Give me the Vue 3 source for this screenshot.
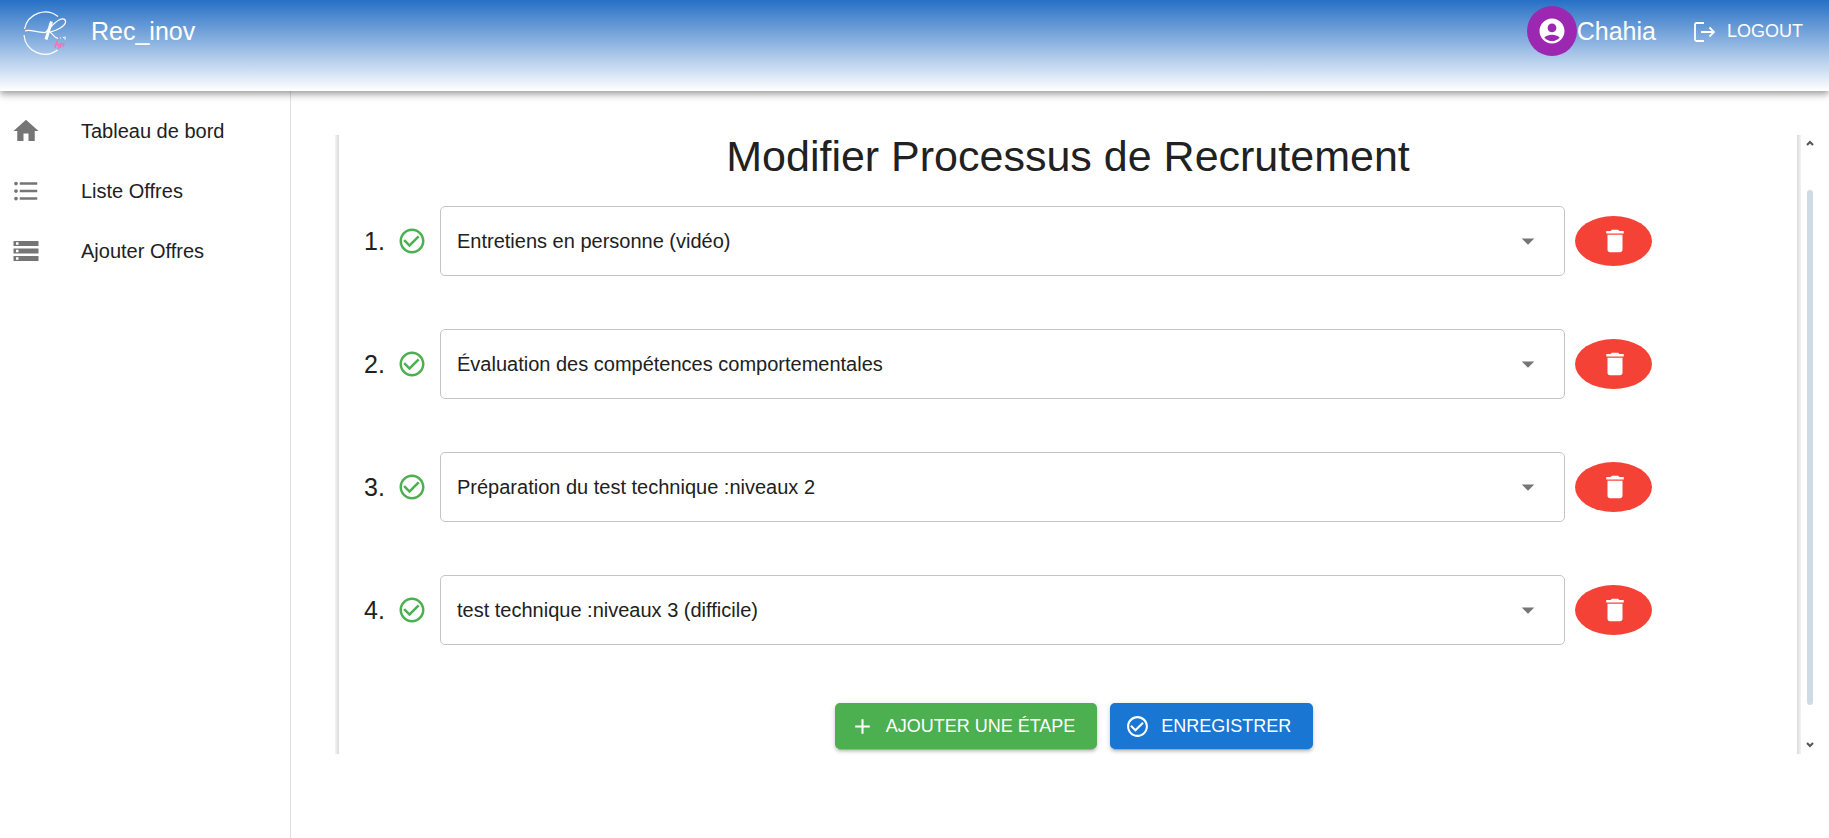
<script setup>
import { ref } from 'vue'

const steps = ref([
  'Entretiens en personne (vidéo)',
  'Évaluation des compétences comportementales',
  'Préparation du test technique :niveaux 2',
  'test technique :niveaux 3 (difficile)',
])
const options = [...steps.value]

const nav = [
  { label: 'Tableau de bord', icon: 'M10 20v-6h4v6h5v-8h3L12 3 2 12h3v8z' },
  {
    label: 'Liste Offres',
    icon: 'M4 10.5c-.83 0-1.5.67-1.5 1.5s.67 1.5 1.5 1.5 1.5-.67 1.5-1.5-.67-1.5-1.5-1.5m0-6c-.83 0-1.5.67-1.5 1.5S3.17 7.5 4 7.5 5.500 6.830 5.500 6 4.830 4.500 4 4.500m0 12c-.83 0-1.500.68-1.500 1.500s.68 1.500 1.500 1.500 1.500-.68 1.500-1.500-.67-1.500-1.500-1.500M7 19h14v-2H7zm0-6h14v-2H7zm0-8v2h14V5z',
  },
  {
    label: 'Ajouter Offres',
    icon: 'M2 20h20v-4H2zm2-3h2v2H4zM2 4v4h20V4zm4 3H4V5h2zm-4 7h20v-4H2zm2-3h2v2H4z',
  },
]

const checkPath =
  'M16.590 7.580 10 14.170l-3.590-3.580L5 12l5 5 8-8zM12 2C6.480 2 2 6.480 2 12s4.480 10 10 10 10-4.480 10-10S17.520 2 12 2m0 18c-4.420 0-8-3.580-8-8s3.580-8 8-8 8 3.580 8 8-3.580 8-8 8'
</script>

<template>
  <div class="page">
    <header class="topbar">
      <div class="brand">
        <svg class="logo" viewBox="0 0 44 44" fill="none" aria-hidden="true">
          <path d="M35 5.500A21 21 0 0 0 1.500 18M1 24A21 21 0 0 0 34.500 39" stroke="#fff" stroke-width="1.200" />
          <path d="M2 20c5-2 9 1 20 1.700C27 18 30 12 36 9c4-2 7-1 6.500 2.500C41 16 33 20 27 21l5 5 3 1.500m2-.5h1m2-.5h1m1-1v3" stroke="#fff" stroke-width="1.200" />
          <path d="M28.500 10.500 23 28.500" stroke="#fff" stroke-width="3" />
          <path d="m34.500 29-2.500 8m-.5-3 4-1m1 0-1.500 5m1-3 2-2-.5 4m1-4 2.500-.5-1 3.500" stroke="#f472b6" stroke-width="1.300" />
        </svg>
        <span class="brand-name">Rec_inov</span>
      </div>
      <div class="account">
        <button class="avatar" type="button" aria-label="Profil">
          <svg viewBox="0 0 24 24" aria-hidden="true"><path d="M12 2C6.480 2 2 6.480 2 12s4.480 10 10 10 10-4.480 10-10S17.520 2 12 2m0 4c1.930 0 3.500 1.570 3.500 3.500S13.930 13 12 13s-3.500-1.570-3.500-3.500S10.070 6 12 6m0 14c-2.030 0-4.430-.82-6.140-2.880C7.550 15.800 9.680 15 12 15s4.450.8 6.140 2.120C16.430 19.180 14.030 20 12 20" /></svg>
        </button>
        <span class="user">Chahia</span>
        <button class="logout" type="button">
          <svg viewBox="0 0 25 25" aria-hidden="true"><path d="M13 4H5.500Q4 4 4 5.500v15Q4 22 5.500 22H13M10 13h13M18.500 8.500 23 13l-4.500 4.500" /></svg>
          LOGOUT
        </button>
      </div>
    </header>

    <div class="body">
      <nav class="sidebar">
        <a v-for="item in nav" :key="item.label" class="nav-item" href="#">
          <svg viewBox="0 0 24 24" aria-hidden="true"><path :d="item.icon" /></svg>
          <span>{{ item.label }}</span>
        </a>
      </nav>

      <main class="content">
        <form class="paper" @submit.prevent>
          <h1>Modifier Processus de Recrutement</h1>
          <ol class="steps">
            <li v-for="(step, i) in steps" :key="i" class="step">
              <label class="number" :for="'step-' + i">{{ i + 1 }}.</label>
              <svg class="check" viewBox="0 0 24 24" aria-hidden="true"><path :d="checkPath" /></svg>
              <div class="field">
                <select :id="'step-' + i" v-model="steps[i]">
                  <option v-for="o in options" :key="o">{{ o }}</option>
                </select>
                <svg class="caret" viewBox="0 0 24 24" aria-hidden="true"><path d="m7 10 5 5 5-5z" /></svg>
              </div>
              <button class="delete" type="button" aria-label="Supprimer">
                <svg viewBox="0 0 24 24" aria-hidden="true"><path d="M6 19c0 1.100.9 2 2 2h8c1.100 0 2-.9 2-2V7H6zM19 4h-3.500l-1-1h-5l-1 1H5v2h14z" /></svg>
              </button>
            </li>
          </ol>
          <div class="actions">
            <button class="action add" type="button">
              <svg viewBox="0 0 24 24" aria-hidden="true"><path d="M19 13h-6v6h-2v-6H5v-2h6V5h2v6h6z" /></svg>
              AJOUTER UNE ÉTAPE
            </button>
            <button class="action save" type="submit">
              <svg viewBox="0 0 24 24" aria-hidden="true"><path :d="checkPath" /></svg>
              ENREGISTRER
            </button>
          </div>
        </form>
        <div class="scrollbar" aria-hidden="true">
          <svg viewBox="0 0 8 6"><path d="m1 5 3-3 3 3" /></svg>
          <div class="track"><div class="thumb"></div></div>
          <svg viewBox="0 0 8 6"><path d="m1 1 3 3 3-3" /></svg>
        </div>
      </main>
    </div>
  </div>
</template>

<style>
body {
  margin: 0;
  background: #fff;
}
</style>

<style scoped>
.page {
  display: flex;
  flex-direction: column;
  min-height: 100vh;
  font-family: "Liberation Sans", Arial, sans-serif;
  font-size: 20px;
  color: #212121;
}
svg {
  display: block;
  flex: none;
  fill: currentColor;
}
button {
  border: 0;
  padding: 0;
  font: inherit;
  color: #fff;
  cursor: pointer;
}
.topbar {
  position: relative;
  z-index: 1;
  display: flex;
  justify-content: space-between;
  align-items: flex-start;
  box-sizing: border-box;
  height: 91px;
  padding: 6px 26px 0 23px;
  color: #fff;
  background: linear-gradient(#2770c6, #fff);
  box-shadow: 0 3px 5px -1px rgba(0, 0, 0, 0.2), 0 5px 6px rgba(0, 0, 0, 0.14), 0 1px 13px rgba(0, 0, 0, 0.12);
}
.brand,
.account {
  display: flex;
  align-items: center;
  height: 50px;
}
.logo {
  width: 44px;
  height: 44px;
  margin-top: 4px;
  fill: none;
}
.brand-name {
  margin-left: 24px;
  font-size: 25px;
}
.avatar {
  display: grid;
  place-items: center;
  width: 50px;
  height: 50px;
  border-radius: 50%;
  background: #9c27b0;
}
.avatar svg {
  width: 30px;
  height: 30px;
}
.user {
  font-size: 25px;
}
.logout {
  display: flex;
  align-items: center;
  gap: 11px;
  margin-left: 35px;
  font-size: 18px;
  background: none;
}
.logout svg {
  width: 25px;
  height: 25px;
  fill: none;
  stroke: currentColor;
  stroke-width: 1.800;
}
.body {
  display: flex;
  flex: 1;
}
.sidebar {
  box-sizing: border-box;
  flex: none;
  width: 291px;
  padding-top: 10px;
  border-right: 1px solid #e0e0e0;
}
.nav-item {
  display: flex;
  align-items: center;
  gap: 40px;
  height: 60px;
  padding-left: 11px;
  color: inherit;
  text-decoration: none;
}
.nav-item svg {
  width: 30px;
  height: 30px;
  color: #757575;
}
.content {
  display: flex;
  align-items: stretch;
  align-self: flex-start;
  flex: 1;
  min-width: 0;
  padding: 44px 15px 40px 44px;
}
.paper {
  box-sizing: border-box;
  flex: 1;
  min-width: 0;
  padding: 0 29px 5px;
  background:
    linear-gradient(to right, #f4f4f4, #dadada) left / 4px 100% no-repeat,
    linear-gradient(to left, #f4f4f4, #dadada) right / 4px 100% no-repeat;
}
h1 {
  margin: 0 0 29px;
  font-size: 43px;
  font-weight: 400;
  line-height: 42px;
  text-align: center;
}
.steps {
  display: flex;
  flex-direction: column;
  gap: 53px;
  margin: 0;
  padding: 0 120px 0 0;
  list-style: none;
}
.step {
  display: flex;
  align-items: center;
}
.number {
  width: 33px;
  font-size: 25px;
}
.check {
  width: 30px;
  height: 30px;
  color: #4caf50;
}
.field {
  position: relative;
  flex: 1;
  margin: 0 10px 0 13px;
}
select {
  display: block;
  box-sizing: border-box;
  width: 100%;
  height: 70px;
  padding: 0 60px 0 16px;
  border: 1px solid #c4c4c4;
  border-radius: 5px;
  font: inherit;
  color: inherit;
  background: #fff;
  appearance: none;
}
.caret {
  position: absolute;
  top: 20px;
  right: 22px;
  width: 30px;
  height: 30px;
  color: #757575;
  pointer-events: none;
}
.delete {
  display: flex;
  align-items: center;
  justify-content: center;
  width: 77px;
  height: 50px;
  padding-left: 3px;
  border-radius: 50%;
  background: #f44336;
}
.delete svg {
  width: 30px;
  height: 30px;
}
.actions {
  display: flex;
  justify-content: center;
  gap: 13px;
  padding: 58px 0 0 12px;
}
.action {
  display: flex;
  align-items: center;
  gap: 11px;
  height: 46px;
  padding: 0 22px 0 15px;
  border-radius: 5px;
  font-size: 18px;
  box-shadow: 0 4px 1px -3px rgba(0, 0, 0, 0.2), 0 3px 3px rgba(0, 0, 0, 0.14), 0 1px 6px rgba(0, 0, 0, 0.12);
}
.action svg {
  width: 25px;
  height: 25px;
}
.add {
  background: #4caf50;
}
.save {
  background: #1976d2;
}
.scrollbar {
  display: flex;
  flex-direction: column;
  align-items: center;
  width: 8px;
  margin-left: 5px;
  padding: 5px 0 6px;
}
.scrollbar svg {
  width: 8px;
  height: 6px;
  fill: none;
  stroke: #555;
  stroke-width: 2;
}
.track {
  flex: 1;
  display: flex;
  padding: 44px 0 37px;
}
.thumb {
  width: 6px;
  border-radius: 3px;
  background: #cfdbe4;
}
</style>
